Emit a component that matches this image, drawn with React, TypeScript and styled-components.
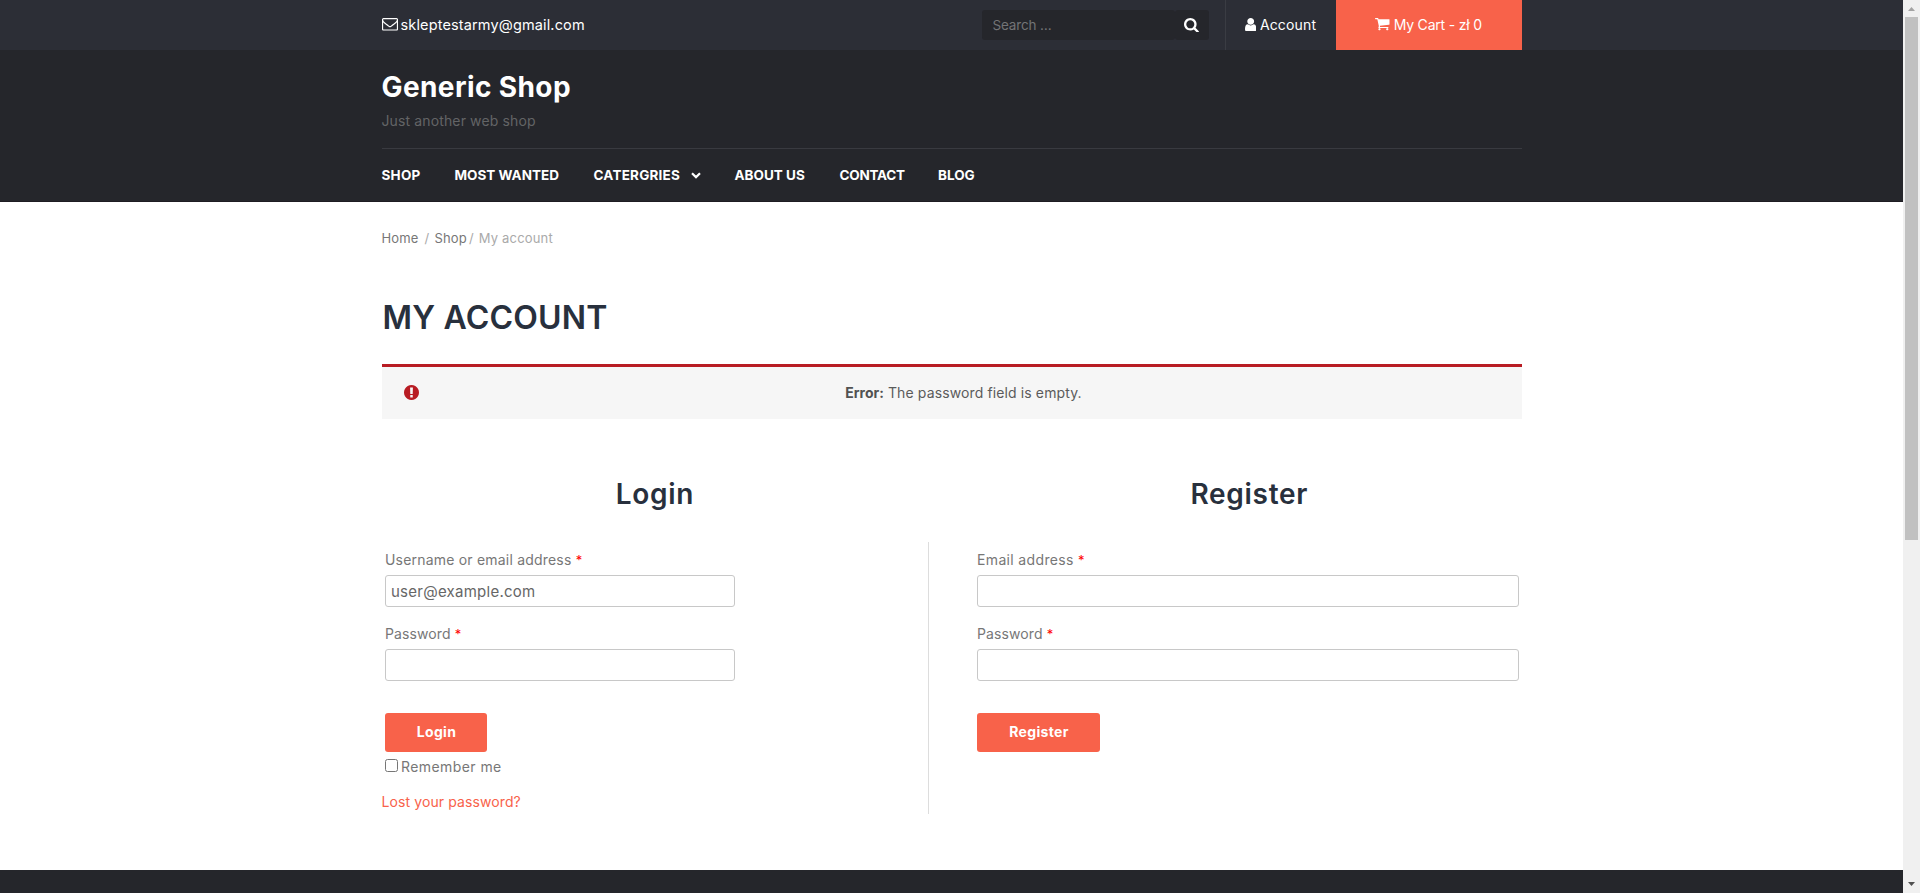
import React from 'react';
import styled, { createGlobalStyle } from 'styled-components';

const GlobalStyle = createGlobalStyle`
  *, *::before, *::after { box-sizing: border-box; }
  body { margin: 0; overflow: hidden; background: #fff; }
  body, input, button { font-family: Inter, "Liberation Sans", sans-serif; }
  h1, h2, p { margin: 0; }
  a { color: inherit; text-decoration: none; }
`;

const Window = styled.div`
  display: flex;
  height: 893px;
  overflow: hidden;
`;
const Page = styled.div`
  flex: 1;
  display: flex;
  flex-direction: column;
  color: #777;
  font-size: 14px;
`;
const Container = styled.div`
  width: 1140px;
  margin: 0 auto;
`;

/* top bar */
const TopBar = styled.div`
  background: #2c2e36;
`;
const TopBarInner = styled(Container)`
  display: flex;
  height: 50px;
  padding-bottom: 0;
  color: #fff;
  font-size: 14px;
`;
const Contact = styled.a`
  display: flex;
  align-items: center;
  gap: 3px;
  height: 49px;
  margin-right: auto;
  font-size: 14.5px;
  letter-spacing: 0.14px;
`;
const Search = styled.form`
  display: flex;
  align-items: center;
  margin-right: 16px;
`;
const SearchInput = styled.input`
  width: 193px;
  height: 30px;
  padding: 0 11px;
  border: 0;
  border-radius: 3px;
  background: #25262b;
  color: #fff;
  font-size: 13.5px;
  letter-spacing: -0.15px;
  &::placeholder { color: #737476; }
`;
const SearchButton = styled.button`
  display: flex;
  align-items: center;
  justify-content: center;
  width: 34px;
  height: 30px;
  padding: 0;
  border: 0;
  border-radius: 3px;
  background: #25262b;
  color: #fff;
`;
const AccountLink = styled.a`
  display: flex;
  align-items: center;
  gap: 4px;
  width: 111px;
  padding: 0 0 1px 19px;
  border-left: 1px solid #3a3c43;
  letter-spacing: 0.15px;
`;
const CartLink = styled.a`
  display: flex;
  align-items: center;
  justify-content: center;
  gap: 4px;
  width: 186px;
  padding-bottom: 1px;
  background: #f8624a;
  letter-spacing: -0.2px;
`;
const Icon = styled.svg`
  display: block;
  flex: none;
  fill: currentColor;
`;

/* header */
const Header = styled.header`
  height: 152px;
  padding-top: 20px;
  background: #25262b;
  border-bottom: 1px solid #1e1c22;
`;
const SiteTitle = styled.p`
  color: #fff;
  font-size: 28px;
  font-weight: 700;
  line-height: 34px;
  letter-spacing: 0.4px;
`;
const Tagline = styled.p`
  margin: 5px 0 15px;
  color: #636466;
  line-height: 24px;
  letter-spacing: 0.13px;
`;
const Nav = styled.nav`
  display: grid;
  grid-template-columns: 73px 139px 141px 105px 98.5px auto;
  align-items: center;
  height: 53px;
  border-top: 1px solid #393a40;
  color: #fff;
  font-size: 13.5px;
  font-weight: 700;
`;
const NavLink = styled.a<{ $tracking?: number }>`
  display: flex;
  align-items: center;
  gap: 11px;
  letter-spacing: ${(p) => p.$tracking ?? 0}px;
`;
const Chevron = styled.svg`
  fill: none;
  stroke: currentColor;
  stroke-width: 2.2;
`;

/* content */
const Breadcrumbs = styled.div`
  display: flex;
  margin-top: 26px;
  color: #aaa;
  font-size: 13px;
  line-height: 20px;
  letter-spacing: 0.17px;
`;
const Crumb = styled.a`
  color: #777;
`;
const Slash = styled.span<{ $before: number; $after: number }>`
  padding: 0 ${(p) => p.$after}px 0 ${(p) => p.$before}px;
`;
const PageTitle = styled.h1`
  margin: 50px 0 26px 1px;
  color: #28303d;
  font-size: 32px;
  font-weight: 600;
  line-height: 40px;
  letter-spacing: 0.2px;
`;
const Alert = styled.div`
  display: flex;
  align-items: center;
  height: 55px;
  padding: 0 32px 0 22px;
  border-top: 3px solid #b81c23;
  background: #f6f6f6;
  color: #b81c23;
  svg { margin-bottom: 1px; }
`;
const AlertText = styled.p`
  flex: 1;
  padding: 0 0 1px 19px;
  color: #5b5b5b;
  text-align: center;
  letter-spacing: 0.12px;
  strong { color: #515151; letter-spacing: 0; }
`;
const Columns = styled.div`
  display: grid;
  grid-template-columns: 547px 544.5px;
  column-gap: 48.5px;
  margin-top: 55px;
`;
const ColumnTitle = styled.h2`
  margin-bottom: 28px;
  color: #28303d;
  font-size: 28px;
  font-weight: 600;
  line-height: 40px;
  letter-spacing: 0.7px;
  text-align: center;
`;
const Form = styled.form<{ $divided?: boolean }>`
  height: 272px;
  padding-top: 7px;
  padding-left: ${(p) => (p.$divided ? 3.5 : 0)}px;
  border-right: ${(p) => (p.$divided ? '1px solid #ddd' : '0')};
`;
const Field = styled.label<{ $width: number; $tracking?: number }>`
  display: block;
  width: ${(p) => p.$width}px;
  margin-bottom: 16px;
  line-height: 22px;
  letter-spacing: ${(p) => p.$tracking ?? 0.2}px;
`;
const Required = styled.span`
  color: #f00;
  font-size: 13px;
`;
const TextInput = styled.input`
  display: block;
  width: 100%;
  height: 32px;
  margin-top: 4px;
  padding: 1px 5px 0;
  border: 1px solid #c8c8c8;
  border-radius: 3px;
  background: #fff;
  color: #666;
  font-size: 15px;
  letter-spacing: 0.25px;
`;
const Submit = styled.button<{ $width: number }>`
  display: block;
  width: ${(p) => p.$width}px;
  height: 39px;
  margin-top: 32px;
  padding: 0 0 2px 1px;
  border: 0;
  border-radius: 3px;
  background: #f8624a;
  color: #fff;
  font-size: 14px;
  font-weight: 700;
  letter-spacing: 0.35px;
`;
const Remember = styled.label`
  display: flex;
  gap: 3px;
  margin-top: 4px;
  line-height: 22px;
  letter-spacing: 0.42px;
  input { width: 13px; height: 13px; margin: 3px 0 0; }
`;
const LostLink = styled.a`
  display: block;
  margin: 13px 0 0 -3.5px;
  color: #f8624a;
  line-height: 22px;
  letter-spacing: 0.1px;
`;
const Footer = styled.footer`
  flex: 1;
  margin-top: 56px;
  background: #25262b;
`;

/* scrollbar */
const Scrollbar = styled.div`
  display: flex;
  flex-direction: column;
  align-items: center;
  width: 17px;
  padding: 7px 0;
  background: #f0f0f0;
`;
const Thumb = styled.div`
  width: 13px;
  height: 523px;
  margin: 6px 0 auto;
  background: #c1c1c1;
`;
const Arrow = styled.svg<{ $dim?: boolean }>`
  display: block;
  fill: ${(p) => (p.$dim ? '#a3a3a3' : '#505050')};
`;

function EnvelopeIcon() {
  return (
    <Icon width="16" height="12.6" viewBox="0 256 1792 1408">
      <path d="M1664 1504v-768q-32 36-69 66-268 206-426 338-51 43-83 67t-86.5 48.5-102.5 24.5h-2q-48 0-102.5-24.5t-86.5-48.5-83-67q-158-132-426-338-37-30-69-66v768q0 13 9.5 22.5t22.5 9.5h1472q13 0 22.5-9.5t9.5-22.5zm0-1051v-24.5l-.5-13-3-12.5-5.5-9-9-7.5-14-2.5h-1472q-13 0-22.5 9.5t-9.5 22.5q0 168 147 284 193 152 401 317 6 5 35 29.5t46 37.5 44.5 31.5 50.5 27.5 43 9h2q20 0 43-9t50.5-27.5 44.5-31.5 46-37.5 35-29.5q208-165 401-317 54-43 100.5-115.5t46.5-131.5zm128-37v1088q0 66-47 113t-113 47h-1472q-66 0-113-47t-47-113v-1088q0-66 47-113t113-47h1472q66 0 113 47t47 113z" />
    </Icon>
  );
}
function SearchIcon() {
  return (
    <Icon width="14.9" height="14.9" viewBox="64 128 1664 1664">
      <path d="M1216 832q0-185-131.5-316.5t-316.5-131.5-316.5 131.5-131.5 316.5 131.5 316.5 316.5 131.5 316.5-131.5 131.5-316.5zm512 832q0 52-38 90t-90 38q-54 0-90-38l-343-342q-179 124-399 124-143 0-273.5-55.5t-225-150-150-225-55.5-273.5 55.5-273.5 150-225 225-150 273.5-55.5 273.5 55.5 225 150 150 225 55.5 273.5q0 220-124 399l343 343q37 37 37 90z" />
    </Icon>
  );
}
function UserIcon() {
  return (
    <Icon width="11.4" height="13.7" viewBox="256 128 1280 1536">
      <path d="M1536 1399q0 109-62.5 187t-150.5 78h-854q-88 0-150.5-78t-62.5-187q0-85 8.5-160.5t31.5-152 58.5-131 94-89 134.5-34.5q131 128 313 128t313-128q76 0 134.5 34.5t94 89 58.5 131 31.5 152 8.5 160.5zm-256-887q0 159-112.5 271.5t-271.5 112.5-271.5-112.5-112.5-271.5 112.5-271.5 271.5-112.5 271.5 112.5 112.5 271.5z" />
    </Icon>
  );
}
function CartIcon() {
  return (
    <Icon width="14.5" height="12.3" viewBox="64 256 1664 1408">
      <path d="M704 1536q0 52-38 90t-90 38-90-38-38-90 38-90 90-38 90 38 38 90zm896 0q0 52-38 90t-90 38-90-38-38-90 38-90 90-38 90 38 38 90zm128-1088v512q0 24-16.5 42.5t-40.5 21.5l-1044 122q13 60 13 70 0 16-24 64h920q26 0 45 19t19 45-19 45-45 19h-1024q-26 0-45-19t-19-45q0-11 8-31.5t16-36 21.5-40 15.5-29.5l-177-823h-204q-26 0-45-19t-19-45 19-45 45-19h256q16 0 28.5 6.5t19.5 15.5 13 24.5 8 26 5.5 29.5 4.5 26h1201q26 0 45 19t19 45z" />
    </Icon>
  );
}
function ErrorIcon() {
  return (
    <Icon width="15" height="15" viewBox="128 128 1536 1536">
      <path d="M896 128q209 0 385.5 103t279.5 279.5 103 385.5-103 385.5-279.5 279.5-385.5 103-385.5-103-279.5-279.5-103-385.5 103-385.5 279.5-279.5 385.5-103zm128 1247v-190q0-14-9-23.5t-22-9.5h-192q-13 0-23 10t-10 23v190q0 13 10 23t23 10h192q13 0 22-9.5t9-23.5zm-2-344l18-621q0-12-10-18-10-8-24-8h-220q-14 0-24 8-10 6-10 18l17 621q0 10 10 17.5t24 7.5h185q14 0 23.5-7.5t10.5-17.5z" />
    </Icon>
  );
}

const menu = [
  { label: 'SHOP', tracking: 0.25 },
  { label: 'MOST WANTED' },
  { label: 'CATERGRIES', tracking: 0.22, hasChildren: true },
  { label: 'ABOUT US' },
  { label: 'CONTACT', tracking: -0.25 },
  { label: 'BLOG' },
];

export default function App() {
  return (
    <Window>
      <GlobalStyle />
      <Page>
        <TopBar>
          <TopBarInner>
            <Contact href="#"><EnvelopeIcon />skleptestarmy@gmail.com</Contact>
            <Search>
              <SearchInput placeholder="Search …" />
              <SearchButton type="button" aria-label="Search"><SearchIcon /></SearchButton>
            </Search>
            <AccountLink href="#"><UserIcon />Account</AccountLink>
            <CartLink href="#"><CartIcon />My Cart - zł 0</CartLink>
          </TopBarInner>
        </TopBar>
        <Header>
          <Container>
            <SiteTitle>Generic Shop</SiteTitle>
            <Tagline>Just another web shop</Tagline>
            <Nav>
              {menu.map((item) => (
                <NavLink href="#" key={item.label} $tracking={item.tracking}>
                  {item.label}
                  {item.hasChildren && (
                    <Chevron width="10" height="7" viewBox="0 0 10 7"><path d="M1 1.2 5 5.1 9 1.2" /></Chevron>
                  )}
                </NavLink>
              ))}
            </Nav>
          </Container>
        </Header>
        <Container>
          <Breadcrumbs>
            <Crumb href="#">Home</Crumb>
            <Slash $before={6} $after={5}>/</Slash>
            <Crumb href="#">Shop</Crumb>
            <Slash $before={2} $after={5}>/</Slash>
            <span>My account</span>
          </Breadcrumbs>
          <PageTitle>MY ACCOUNT</PageTitle>
          <Alert>
            <ErrorIcon />
            <AlertText><strong>Error:</strong> The password field is empty.</AlertText>
          </Alert>
          <Columns>
            <section>
              <ColumnTitle>Login</ColumnTitle>
              <Form $divided>
                <Field $width={350}>
                  Username or email address <Required>*</Required>
                  <TextInput type="text" defaultValue="user@example.com" />
                </Field>
                <Field $width={350} $tracking={0.1}>
                  Password <Required>*</Required>
                  <TextInput type="password" />
                </Field>
                <Submit type="button" $width={102}>Login</Submit>
                <Remember><input type="checkbox" />Remember me</Remember>
                <LostLink href="#">Lost your password?</LostLink>
              </Form>
            </section>
            <section>
              <ColumnTitle>Register</ColumnTitle>
              <Form>
                <Field $width={542} $tracking={0.35}>
                  Email address <Required>*</Required>
                  <TextInput type="email" />
                </Field>
                <Field $width={542} $tracking={0.1}>
                  Password <Required>*</Required>
                  <TextInput type="password" />
                </Field>
                <Submit type="button" $width={123}>Register</Submit>
              </Form>
            </section>
          </Columns>
        </Container>
        <Footer />
      </Page>
      <Scrollbar>
        <Arrow $dim width="7" height="4" viewBox="0 0 7 4"><path d="M0 4 3.5 0 7 4z" /></Arrow>
        <Thumb />
        <Arrow width="7" height="4" viewBox="0 0 7 4"><path d="M0 0 3.5 4 7 0z" /></Arrow>
      </Scrollbar>
    </Window>
  );
}
